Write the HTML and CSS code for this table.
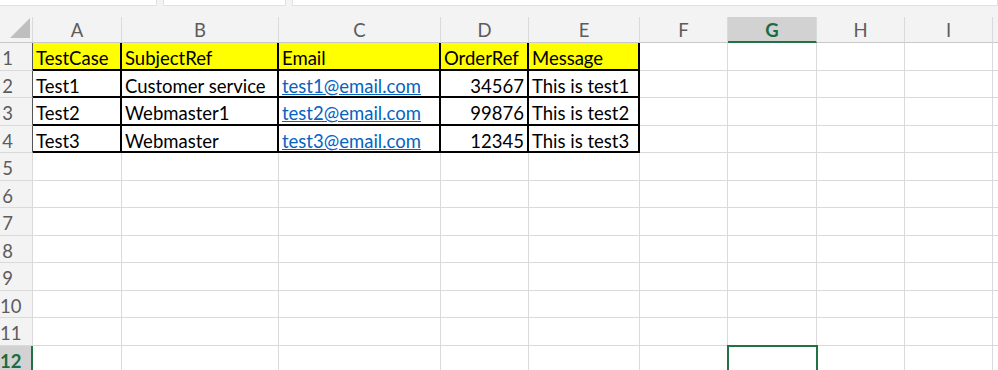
FILE: index.html
```html
<!DOCTYPE html>
<html lang="en">
<head>
    <meta charset="UTF-8">
    <meta name="viewport" content="width=device-width, initial-scale=1.0">
    <title>Book1 - Sheet1</title>
    <link rel="stylesheet" href="styles.css">
</head>
<body>
    <div class="ribbon">
        <div class="box name"></div>
        <div class="box fx"></div>
        <div class="box formula"></div>
    </div>

    <div class="sheet" id="sheet">
        <div class="corner"><span class="tri"></span></div>
        <div class="ch">A</div>
        <div class="ch">B</div>
        <div class="ch">C</div>
        <div class="ch">D</div>
        <div class="ch">E</div>
        <div class="ch">F</div>
        <div class="ch sel">G</div>
        <div class="ch">H</div>
        <div class="ch">I</div>
        <div class="ch"></div>

        <div class="rh edge">1</div>
        <div class="c t hd">TestCase</div>
        <div class="c t hd">SubjectRef</div>
        <div class="c t hd">Email</div>
        <div class="c t hd">OrderRef</div>
        <div class="c t hd">Message</div>
        <div class="c"></div><div class="c"></div><div class="c"></div><div class="c"></div><div class="c"></div>

        <div class="rh edge">2</div>
        <div class="c t">Test1</div>
        <div class="c t">Customer service</div>
        <div class="c t"><a href="mailto:test1@email.com">test1@email.com</a></div>
        <div class="c t num">34567</div>
        <div class="c t">This is test1</div>
        <div class="c"></div><div class="c"></div><div class="c"></div><div class="c"></div><div class="c"></div>

        <div class="rh edge">3</div>
        <div class="c t">Test2</div>
        <div class="c t">Webmaster1</div>
        <div class="c t"><a href="mailto:test2@email.com">test2@email.com</a></div>
        <div class="c t num">99876</div>
        <div class="c t">This is test2</div>
        <div class="c"></div><div class="c"></div><div class="c"></div><div class="c"></div><div class="c"></div>

        <div class="rh edge">4</div>
        <div class="c t">Test3</div>
        <div class="c t">Webmaster</div>
        <div class="c t"><a href="mailto:test3@email.com">test3@email.com</a></div>
        <div class="c t num">12345</div>
        <div class="c t">This is test3</div>
        <div class="c"></div><div class="c"></div><div class="c"></div><div class="c"></div><div class="c"></div>
    </div>

    <script>
        // empty rows 5..12, G12 is the active cell
        const sheet = document.getElementById('sheet');
        for (let r = 5; r <= 12; r++) {
            let html = `<div class="rh${r === 12 ? ' sel' : ''}">${r}</div>`;
            for (let c = 0; c < 10; c++) {
                html += `<div class="c${r === 12 && c === 6 ? ' active' : ''}"></div>`;
            }
            sheet.insertAdjacentHTML('beforeend', html);
        }
    </script>
</body>
</html>
```

FILE: styles.css
```css
body {
    margin: 0;
    font-family: Lato, "Liberation Sans", sans-serif;
    font-size: 18.5px;
    background-color: #fff;
    overflow: hidden;
}
.ribbon {
    height: 17px;
    background-color: #f3f3f3;
    display: flex;
    gap: 6px;
}
.box {
    height: 5px;
    background-color: #fff;
    border: 1px solid #e1e1e1;
    border-top: none;
}
.box.name {
    width: 156px;
    margin-left: -1px;
}
.box.fx {
    width: 121px;
}
.box.formula {
    flex: 1;
}
.sheet {
    display: grid;
    grid-template-columns: 33px 89px 157px 162px 88px 111px 88px 89px 88px 88px 1fr;
    grid-template-rows: 26px;
    grid-auto-rows: 27.5px;
}
.sheet > div {
    box-sizing: border-box;
    border-right: 1px solid #dadada;
    border-bottom: 1px solid #dadada;
    white-space: nowrap;
    line-height: 31px;
}
.sheet > div:nth-child(11n) {
    border-right: none;
}
.corner {
    background-color: #f3f3f3;
    display: flex;
    justify-content: flex-end;
    align-items: flex-end;
    padding: 0 2px 4px 0;
}
.tri {
    width: 20px;
    height: 20px;
    background-color: #bfbfbf;
    clip-path: polygon(100% 0, 100% 100%, 0 100%);
}
.sheet > .ch {
    background-color: #f3f3f3;
    color: #5c5c5c;
    text-align: center;
    line-height: 27px;
}
.sheet > .ch,
.sheet > .corner {
    border-bottom-color: #c9c9c9;
}
.sheet > .ch.sel {
    background-color: #d2d2d2;
    color: #1d6b40;
    font-weight: bold;
    border-bottom: 2px solid #217346;
}
.rh {
    background-color: #f3f3f3;
    color: #5c5c5c;
    text-align: center;
    padding-right: 17px;
}
.sheet > .rh.edge {
    border-right-color: #555;
}
.sheet > .rh.sel {
    background-color: #d2d2d2;
    color: #1d6b40;
    font-weight: bold;
    border-right: 2px solid #217346;
}
.c {
    padding: 0 3px;
    color: #000;
}
.sheet > .t {
    border-right: 2px solid #000;
    border-bottom: 2px solid #000;
}
.hd {
    background-color: #ffff00;
}
.num {
    text-align: right;
}
.c a {
    color: #0563c1;
    text-decoration: underline;
}
.sheet > .active {
    outline: 2px solid #217346;
    outline-offset: -1px;
}
```
